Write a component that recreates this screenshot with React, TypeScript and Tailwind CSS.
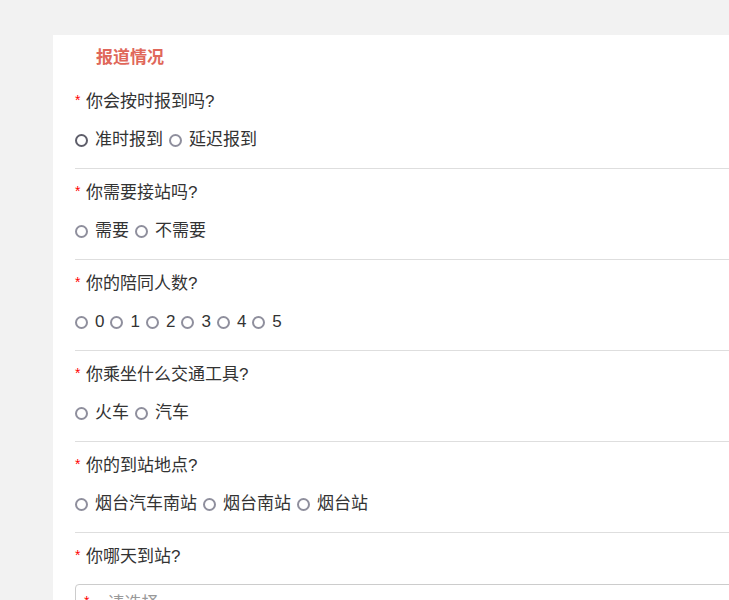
import React from 'react';

type Question = {
  title: string;
  options: string[];
};

const questions: Question[] = [
  { title: '你会按时报到吗?', options: ['准时报到', '延迟报到'] },
  { title: '你需要接站吗?', options: ['需要', '不需要'] },
  { title: '你的陪同人数?', options: ['0', '1', '2', '3', '4', '5'] },
  { title: '你乘坐什么交通工具?', options: ['火车', '汽车'] },
  { title: '你的到站地点?', options: ['烟台汽车南站', '烟台南站', '烟台站'] },
];

function Label({ text }: { text: string }) {
  return (
    <div className="flex items-center h-6 text-[17px] leading-6 text-[#333]">
      <span className="w-[11px] text-[#ff0000] text-[14px] leading-none -mt-[5px]">*</span>
      <span>{text}</span>
    </div>
  );
}

function Radio({ dark }: { dark?: boolean }) {
  return (
    <span
      className={`inline-block w-[13px] h-[13px] rounded-full border-2 bg-white shrink-0 ${
        dark ? 'border-[#5e5e6a]' : 'border-[#8f8f9d]'
      }`}
    />
  );
}

export default function App() {
  return (
    <div
      className="w-full h-[600px] overflow-hidden bg-[#f2f2f2] pt-[35px] pl-[53px]"
      style={{ fontFamily: '"Liberation Sans", "Noto Sans CJK SC", sans-serif' }}
    >
      <div className="w-[760px] bg-white pl-[22px] pt-[11px] min-h-[600px]">
        <div className="pl-[21px] h-6 leading-6 text-[17px] font-bold text-[#e0675a]">报道情况</div>
        <div className="mt-[20px]">
          {questions.map((q, qi) => (
            <div key={q.title} className={qi === 0 ? '' : 'pt-[12px]'}>
              <Label text={q.title} />
              <div className="flex items-center h-6 mt-[14px] text-[17px] text-[#333]">
                {q.options.map((o, i) => (
                  <span key={o} className={`flex items-center ${i === 0 ? '' : 'ml-[6px]'}`}>
                    <Radio dark={qi === 0 && i === 0} />
                    <span className="ml-[7px]">{o}</span>
                  </span>
                ))}
              </div>
              <div className="mt-[16px] h-px bg-[#dedede]" />
            </div>
          ))}
          <div className="pt-[12px]">
            <Label text="你哪天到站?" />
            <div className="mt-[15px] h-[40px] border border-[#cccccc] rounded-[4px] flex items-center pl-[8px] text-[17px]">
              <span className="text-[#ff0000] text-[14px] -mt-[5px]">*</span>
              <span className="ml-[18px] text-[#999]">请选择</span>
            </div>
          </div>
        </div>
      </div>
    </div>
  );
}
